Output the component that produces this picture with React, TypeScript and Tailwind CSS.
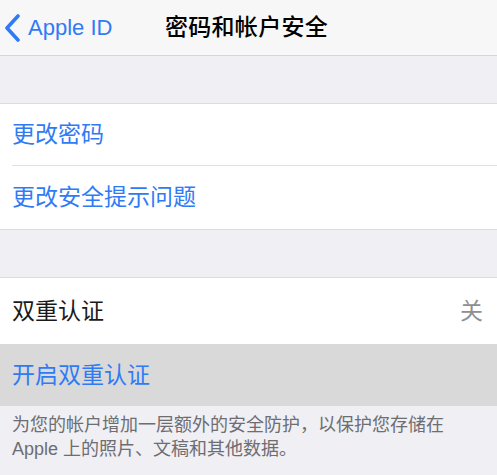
export default function App() {
  const font = { fontFamily: '"Liberation Sans", "Noto Sans CJK SC", sans-serif' }
  return (
    <div className="w-[497px] h-[475px] overflow-hidden bg-[#efeff4]" style={font}>
      {/* Nav bar */}
      <div className="relative h-[56px] bg-[#f7f7f8] border-b border-[#d6d6da] flex items-center">
        <div className="flex items-center pl-[4px] text-[#2f7bf5]">
          <svg width="17" height="28" viewBox="0 0 17 28" fill="none">
            <path d="M14 2 L3 14 L14 26" stroke="#2f7bf5" strokeWidth="3.6" strokeLinecap="round" strokeLinejoin="round" />
          </svg>
          <span className="ml-[7px] text-[22px] leading-none">Apple ID</span>
        </div>
        <div className="absolute left-0 right-0 top-0 h-full flex items-center justify-center pointer-events-none">
          <span className="text-[23px] leading-none font-medium text-black tracking-[0.3px] -ml-[4px]">密码和帐户安全</span>
        </div>
      </div>

      {/* Spacer */}
      <div className="h-[47px]" />

      {/* Section 1 */}
      <div className="bg-white border-t border-b border-[#dcdce0]">
        <div className="ml-[12px] h-[62px] flex items-center border-b border-[#e2e2e6]">
          <span className="text-[23px] leading-none text-[#2f7bf5]">更改密码</span>
        </div>
        <div className="h-[63px] flex items-center pl-[12px]">
          <span className="text-[23px] leading-none text-[#2f7bf5]">更改安全提示问题</span>
        </div>
      </div>

      {/* Spacer */}
      <div className="h-[47px]" />

      {/* Section 2 */}
      <div className="bg-white border-t border-[#dcdce0]">
        <div className="h-[66px] flex items-center justify-between pl-[12px] pr-[14px]">
          <span className="text-[23px] leading-none text-[#1a1a1a]">双重认证</span>
          <span className="text-[23px] leading-none text-[#8e8e93]">关</span>
        </div>
        <div className="h-[62px] flex items-center pl-[12px] bg-[#d9d9d9]">
          <span className="text-[23px] leading-none text-[#2f7bf5]">开启双重认证</span>
        </div>
      </div>

      {/* Footer */}
      <div className="px-[12px] pt-[7px] text-[18px] leading-[24px] text-[#6d6d72]">
        为您的帐户增加一层额外的安全防护，以保护您存储在
        <br />
        Apple 上的照片、文稿和其他数据。
      </div>
    </div>
  )
}
